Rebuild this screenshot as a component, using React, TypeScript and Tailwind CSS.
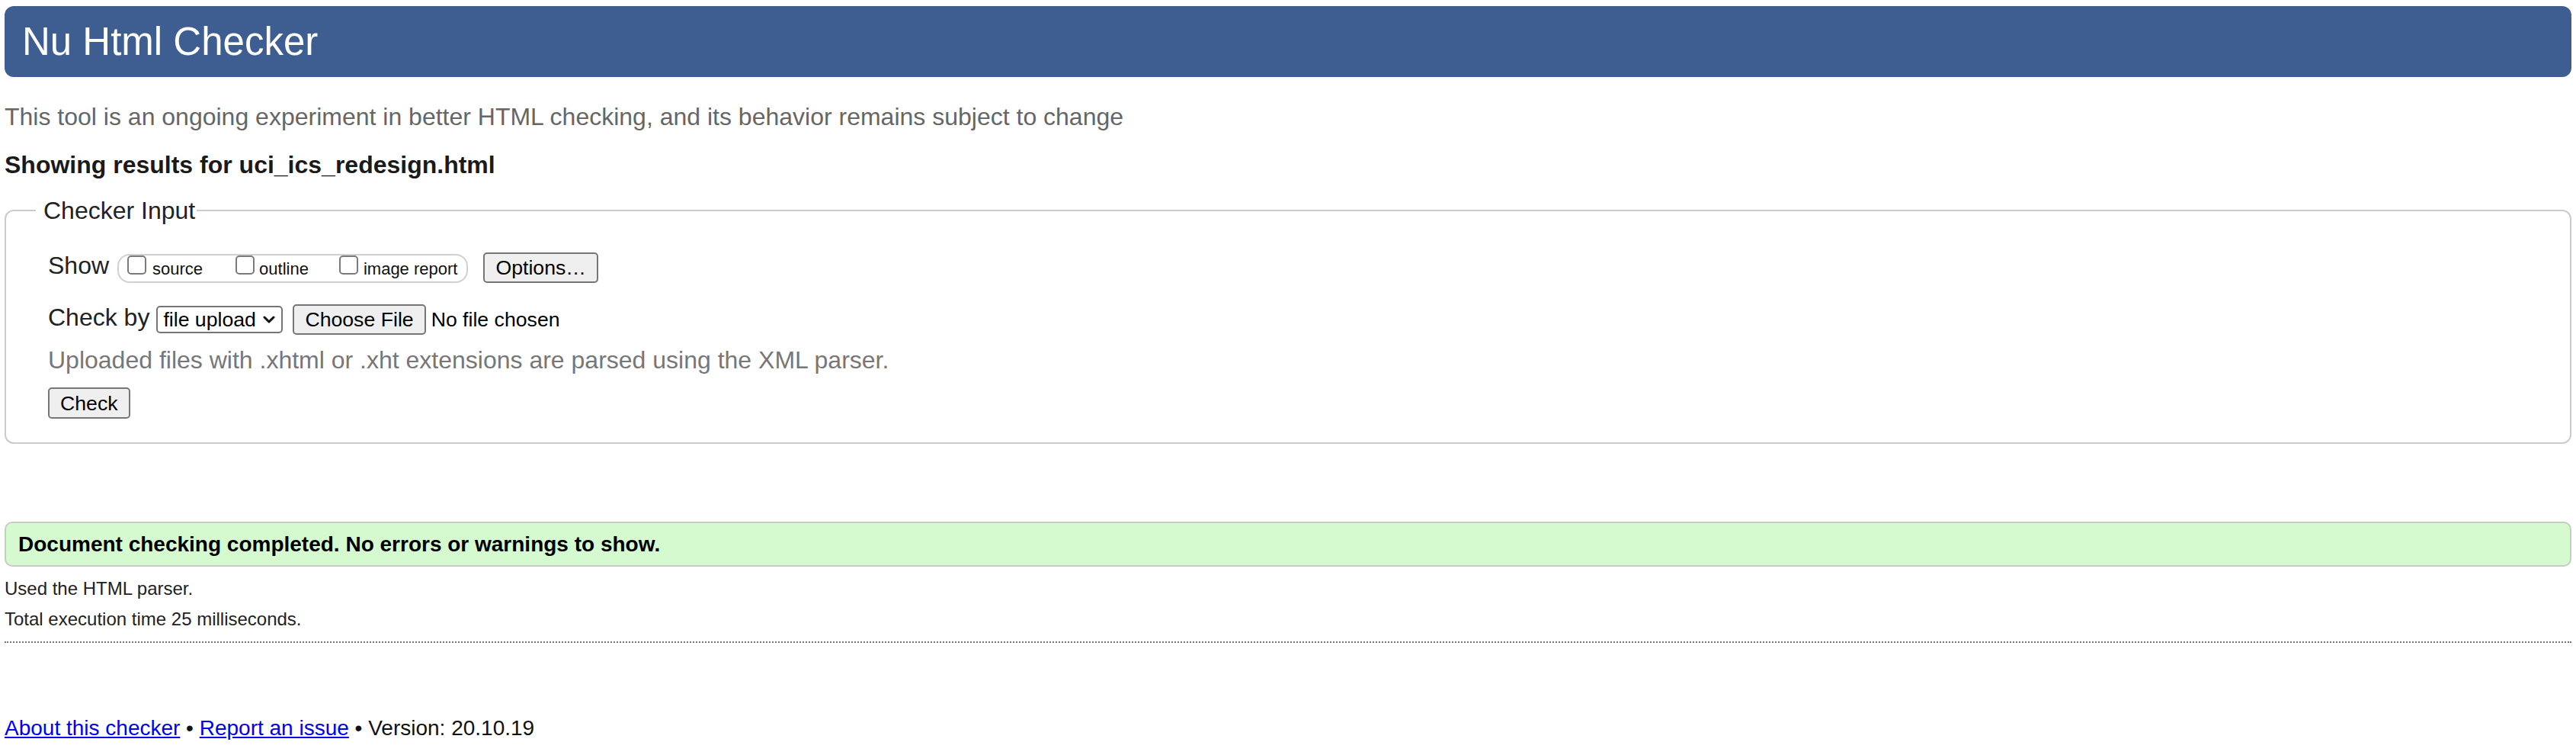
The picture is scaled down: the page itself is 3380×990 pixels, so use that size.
import React from 'react';

const font = { fontFamily: '"Liberation Sans", Arial, Helvetica, sans-serif' };

const Checkbox = () => (
  <span className="inline-block w-[25px] h-[25px] shrink-0 rounded-[5px] border-2 border-[#7a7a7a] bg-white" />
);

export default function App() {
  return (
    <div style={font} className="h-[990px] overflow-hidden bg-white px-[6px] pt-[8px] text-[#222]">
      {/* Header */}
      <div className="h-[93px] rounded-[12px] bg-[#3e5e92] pl-[23px] text-[51px] leading-[93px] text-white">
        Nu Html Checker
      </div>

      <p className="mt-[32px] text-[32px] leading-[40px] text-[#666]">
        This tool is an ongoing experiment in better HTML checking, and its behavior remains subject to change
      </p>

      <p className="mt-[23px] text-[32px] font-bold leading-[40px] text-[#1a1a1a]">
        Showing results for uci_ics_redesign.html
      </p>

      {/* Checker input */}
      <fieldset className="mt-[20px] rounded-[12px] border-2 border-[#cbcbcb] pb-[31px] pl-[55px] pr-[20px]">
        <legend className="-ml-[16px] pl-[10px] pr-[2px] text-[32px] leading-[40px] text-[#222]">
          Checker Input
        </legend>

        <div className="mt-[35px] flex items-start">
          <span className="-mt-[3px] text-[32px] leading-[40px]">Show</span>
          <div className="ml-[11px] mt-[2px] flex h-[38px] items-baseline rounded-[16px] border-2 border-[#d0d0d0] pl-[11px] pr-[12px] text-[22px] leading-[25px] text-[#111]">
            <Checkbox />
            <span className="ml-[8px]">source</span>
            <span className="ml-[43px] flex items-baseline">
              <Checkbox />
            </span>
            <span className="ml-[6px]">outline</span>
            <span className="ml-[40px] flex items-baseline">
              <Checkbox />
            </span>
            <span className="ml-[7px]">image report</span>
          </div>
          <button className="ml-[20px] flex h-[40px] items-center rounded-[5px] border-2 border-[#767676] bg-[#efefef] px-[14px] text-[26.67px] text-black">
            Options…
          </button>
        </div>

        <div className="mt-[28px] flex items-start">
          <span className="-mt-[3px] text-[32px] leading-[40px]">Check by</span>
          <div className="ml-[9px] mt-[2px] flex h-[36px] w-[166px] items-center justify-between rounded-[5px] border-2 border-[#767676] bg-white pl-[7px] pr-[8px] text-[26.67px] text-black">
            <span>file upload</span>
            <svg width="16" height="11" viewBox="0 0 16 11" fill="none">
              <polyline points="2,2 8,8 14,2" stroke="#111" strokeWidth="3" strokeLinecap="round" strokeLinejoin="round" />
            </svg>
          </div>
          <button className="ml-[13px] flex h-[40px] items-center rounded-[5px] border-2 border-[#767676] bg-[#efefef] px-[14px] text-[26.67px] text-black">
            Choose File
          </button>
          <span className="ml-[7px] text-[26.67px] leading-[40px] text-black">No file chosen</span>
        </div>

        <p className="mt-[13px] text-[32px] leading-[40px] text-[#777]">
          Uploaded files with .xhtml or .xht extensions are parsed using the XML parser.
        </p>

        <button className="mt-[16px] flex h-[41px] items-center rounded-[5px] border-2 border-[#767676] bg-[#efefef] px-[14px] text-[26.67px] text-black">
          Check
        </button>
      </fieldset>

      {/* Result */}
      <div className="mt-[102px] flex h-[59px] items-center rounded-[10px] border-2 border-[#c5cdc4] bg-[#d5fad0] pl-[16px] text-[28px] font-bold text-black">
        Document checking completed. No errors or warnings to show.
      </div>

      <p className="mt-[9px] text-[24px] leading-[40px] text-[#222]">Used the HTML parser.</p>
      <p className="text-[24px] leading-[40px] text-[#222]">Total execution time 25 milliseconds.</p>

      <div className="mt-[9px] border-t-2 border-dotted border-[#777]" />

      {/* Footer */}
      <p className="mt-[92px] text-[28px] leading-[40px] text-[#111]">
        <a href="#" className="text-[#0000ee] underline">About this checker</a>
        {' • '}
        <a href="#" className="text-[#0000ee] underline">Report an issue</a>
        {' • Version: 20.10.19'}
      </p>
    </div>
  );
}
